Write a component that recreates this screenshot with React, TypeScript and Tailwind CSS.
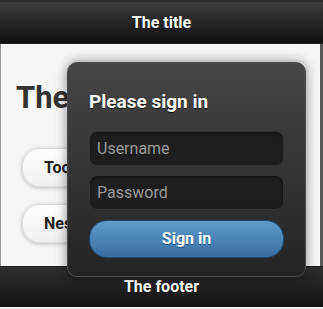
import React from "react";

export default function App() {
  return (
    <div className="relative w-[323px] h-[309px] overflow-hidden bg-[#f4f4f4] flex flex-col" style={{ fontFamily: "Roboto, 'Liberation Sans', sans-serif" }}>
      <div className="h-[2px] bg-[#2a2a2a]" />
      <div className="h-[42px] flex items-center justify-center bg-gradient-to-b from-[#3c3c3c] to-[#111111] border-b border-[#1a1a1a] text-white font-bold text-[16px] [text-shadow:0_1px_0_#111]">
        The title
      </div>
      <div className="flex-1 flex border-l border-l-[#9c9c9c] border-r-[3px] border-r-[#585858] bg-[#f6f6f6]">
        <div className="flex-1 flex flex-col pl-[15px] pr-[15px] pt-[38px]">
          <h1 className="text-[31px] leading-[31px] font-bold text-[#333] whitespace-nowrap">The page</h1>
          <div className="mt-[35px] flex flex-col gap-[17px] pl-[6px]">
            <div className="w-[200px] h-[39px] rounded-[18px] border border-[#dcdcdc] bg-gradient-to-b from-[#ffffff] to-[#f0f0f0] shadow-[0_1px_4px_rgba(0,0,0,0.25)] flex items-center pl-[21px] font-bold text-[16px] text-[#222]">Toolbars</div>
            <div className="w-[200px] h-[39px] rounded-[18px] border border-[#dcdcdc] bg-gradient-to-b from-[#ffffff] to-[#f0f0f0] shadow-[0_1px_4px_rgba(0,0,0,0.25)] flex items-center pl-[21px] font-bold text-[16px] text-[#222]">Nested list</div>
          </div>
        </div>
      </div>
      <div className="h-[41px] flex items-center justify-center bg-gradient-to-b from-[#2f2f2f] to-[#121212] border-t border-[#1b1b1b] text-white font-bold text-[16px] [text-shadow:0_1px_0_#111]">
        <span className="-mt-[1px]">The footer</span>
      </div>
      <div className="h-[2px] bg-[#f0f0f0]" />

      <div className="absolute left-[67px] top-[62px] w-[239px] h-[215px] rounded-[10px] border border-[#4a4a4a] bg-gradient-to-b from-[#464646] to-[#242424] shadow-[0_0_12px_rgba(0,0,0,0.45)] px-[21px] pt-[28px]">
        <div className="text-white font-bold text-[19px] leading-[22px] [text-shadow:0_1px_0_#111]">Please sign in</div>
        <div className="mt-[18px] flex flex-col gap-[9px]">
          <div className="h-[35px] rounded-[8px] bg-[#1e1e1e] border border-[#333] shadow-[inset_0_1px_3px_rgba(0,0,0,0.4)] flex items-center pl-[7px] text-[16px] text-[#9a9a9a]">Username</div>
          <div className="h-[35px] rounded-[8px] bg-[#1e1e1e] border border-[#333] shadow-[inset_0_1px_3px_rgba(0,0,0,0.4)] flex items-center pl-[7px] text-[16px] text-[#9a9a9a]">Password</div>
          <div className="mt-[1px] h-[38px] rounded-[18px] bg-gradient-to-b from-[#5d9bcb] to-[#3a6ea3] border border-[#1b4a74] flex items-center justify-center text-white font-bold text-[16px] [text-shadow:0_1px_0_#194b7e]">Sign in</div>
        </div>
      </div>
    </div>
  );
}
